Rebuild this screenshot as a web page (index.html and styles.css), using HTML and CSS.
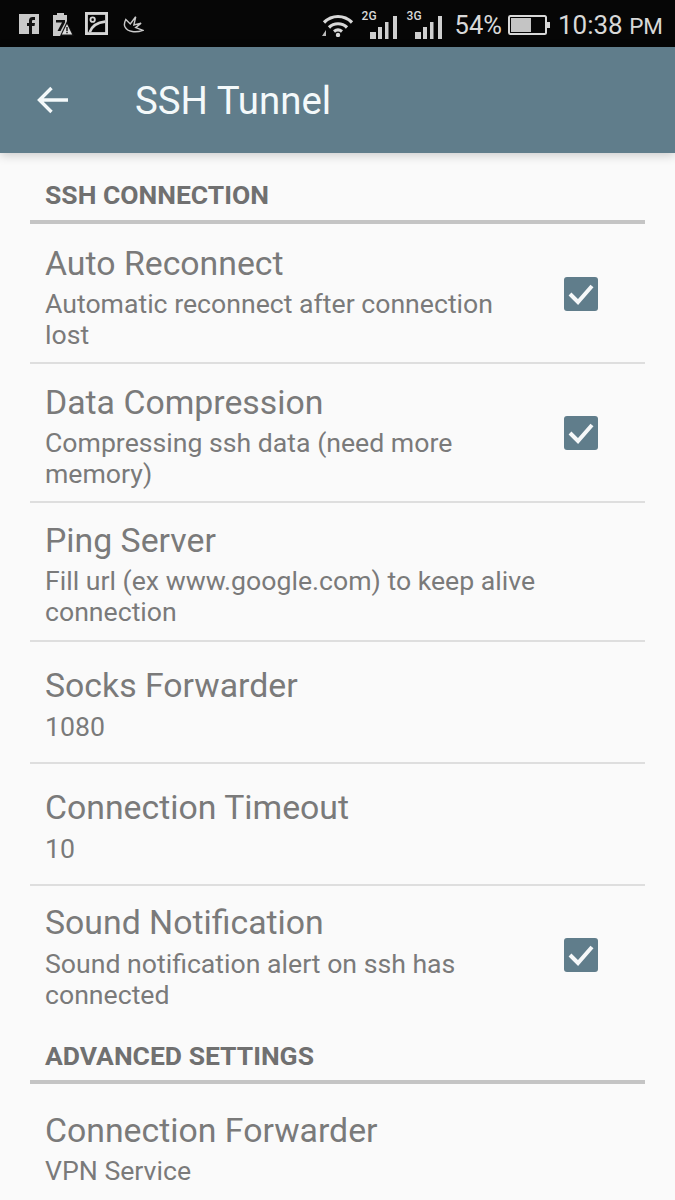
FILE: index.html
```html
<!DOCTYPE html>
<html lang="en">
  <head>
    <meta charset="UTF-8" />
    <meta name="viewport" content="width=device-width, initial-scale=1.0" />
    <title>SSH Tunnel</title>
    <link rel="stylesheet" href="styles.css">
  </head>
  <body>
    <div class="status-bar">
      <div class="status-left">
        <svg class="ic-fb" viewBox="0 0 20 20"><path fill="#c9c9c9" d="M0 0h20v20H0z"/><path fill="#111" d="M10 20v-8H8V9h2V6.500C10 4 11.500 3 13.500 3H16v3h-1.600c-.9 0-1.400.4-1.400 1.300V9h3l-.5 3H13v8z"/></svg>
        <svg class="ic-bat" viewBox="0 0 22 24"><path fill="#c9c9c9" d="M5 1h7v2h3v21H1V3h4z"/><path fill="#111" d="M4 8h9v2.500L8.500 19H5.500L10 10.500H4z"/><path fill="#111" d="M15 9l7 15H8z"/><path fill="#ddd" d="M15 12l5.200 10.500H9.800z"/><path fill="#111" d="M14.300 15h1.400v4h-1.400zM14.300 19.800h1.400v1.400h-1.400z"/></svg>
        <svg class="ic-pic" viewBox="0 0 24 24"><rect x="1.500" y="1.500" width="21" height="21" fill="none" stroke="#d6d6d6" stroke-width="3"/><circle cx="8" cy="8" r="2.300" fill="none" stroke="#d6d6d6" stroke-width="1.900"/><path fill="none" stroke="#d6d6d6" stroke-width="2.800" d="M5 21c2-6 7-10 16-11"/></svg>
        <svg class="ic-bird" viewBox="0 0 24 20"><path fill="none" stroke="#c9c9c9" stroke-width="1.600" d="M4 5l5 5 6-8-2 9 8-2-6 5 8 3c-8 3-17 2-20-4-1-2-.5-5 1-8z"/></svg>
      </div>
      <div class="status-right">
        <svg class="ic-wifi" viewBox="0 0 34 24"><g fill="none" stroke="#d8d8d8" stroke-width="3.200"><path d="M3 9.500c8-8 20-8 28 0"/><path d="M8 14.500c5-5 13-5 18 0"/><path d="M13 18.500c2.500-2 5.500-2 8 0"/></g><circle cx="17" cy="22" r="2.200" fill="#d8d8d8"/><path fill="#bbb" d="M1 23l4-6v6z"/></svg>
        <div class="signal">
          <span class="net">2G</span>
          <svg class="ic-bars" viewBox="0 0 27 23"><path fill="#cfcfcf" d="M0 16h6v7H0zM8 11h4v12H8zM15 6h3.500v17H15zM23 0h4v23h-4z"/></svg>
        </div>
        <div class="signal">
          <span class="net">3G</span>
          <svg class="ic-bars" viewBox="0 0 27 23"><path fill="#cfcfcf" d="M0 16h6v7H0zM8 11h4v12H8zM15 6h3.500v17H15zM23 0h4v23h-4z"/></svg>
        </div>
        <span class="percent">54%</span>
        <svg class="ic-battery" viewBox="0 0 42 20"><rect x="1" y="1" width="37" height="18" rx="1.500" fill="none" stroke="#d8d8d8" stroke-width="2"/><rect x="3" y="3" width="20" height="14" fill="#c4c4c4"/><rect x="39" y="7" width="3" height="6" fill="#d8d8d8"/></svg>
        <span class="clock">10:38 <small>PM</small></span>
      </div>
    </div>

    <div class="toolbar">
      <svg class="ic-back" viewBox="0 0 32 28"><path fill="none" stroke="#f4f9fa" stroke-width="3.400" d="M31 14H3M14.500 2L2.500 14l12 12"/></svg>
      <div class="toolbar-title">SSH Tunnel</div>
    </div>

    <div class="settings">
      <div class="category">SSH CONNECTION</div>

      <div class="pref tall first">
        <div class="pref-text">
          <div class="pref-title">Auto Reconnect</div>
          <div class="pref-sub">Automatic reconnect after connection lost</div>
        </div>
        <svg class="check" viewBox="0 0 34 34"><rect width="34" height="34" rx="3" fill="#607d8b"/><path fill="none" stroke="#f6f8f9" stroke-width="4" d="M6 17l8 8L28 9"/></svg>
      </div>

      <div class="pref tall">
        <div class="pref-text">
          <div class="pref-title">Data Compression</div>
          <div class="pref-sub">Compressing ssh data (need more memory)</div>
        </div>
        <svg class="check" viewBox="0 0 34 34"><rect width="34" height="34" rx="3" fill="#607d8b"/><path fill="none" stroke="#f6f8f9" stroke-width="4" d="M6 17l8 8L28 9"/></svg>
      </div>

      <div class="pref tall ping">
        <div class="pref-text">
          <div class="pref-title">Ping Server</div>
          <div class="pref-sub">Fill url (ex www.google.com) to keep alive connection</div>
        </div>
      </div>

      <div class="pref short">
        <div class="pref-text">
          <div class="pref-title">Socks Forwarder</div>
          <div class="pref-sub">1080</div>
        </div>
      </div>

      <div class="pref short">
        <div class="pref-text">
          <div class="pref-title">Connection Timeout</div>
          <div class="pref-sub">10</div>
        </div>
      </div>

      <div class="pref sound">
        <div class="pref-text">
          <div class="pref-title">Sound Notification</div>
          <div class="pref-sub">Sound notification alert on ssh has connected</div>
        </div>
        <svg class="check" viewBox="0 0 34 34"><rect width="34" height="34" rx="3" fill="#607d8b"/><path fill="none" stroke="#f6f8f9" stroke-width="4" d="M6 17l8 8L28 9"/></svg>
      </div>

      <div class="category second">ADVANCED SETTINGS</div>

      <div class="pref last">
        <div class="pref-text">
          <div class="pref-title">Connection Forwarder</div>
          <div class="pref-sub">VPN Service</div>
        </div>
      </div>
    </div>
  </body>
</html>
```

FILE: styles.css
```css
* {
  box-sizing: border-box;
}
html,
body {
  margin: 0;
  height: 1200px;
  overflow: hidden;
}
body {
  background-color: #fafafa;
  font-family: Roboto, "Liberation Sans", sans-serif;
  color: #7a7a7a;
}
svg {
  display: block;
  flex-shrink: 0;
}

/* status bar */
.status-bar {
  height: 47px;
  background-color: #060606;
  display: flex;
  justify-content: space-between;
  align-items: center;
  padding: 0 12px 0 19px;
  color: #d8d8d8;
}
.status-left {
  display: flex;
  align-items: center;
}
.ic-fb {
  width: 20px;
  height: 20px;
  margin-right: 13px;
}
.ic-bat {
  width: 22px;
  height: 24px;
  margin-right: 11px;
}
.ic-pic {
  width: 23px;
  height: 23px;
  margin-right: 14px;
}
.ic-bird {
  width: 22px;
  height: 18px;
}
.status-right {
  display: flex;
  align-items: center;
  margin-top: 2px;
}
.ic-wifi {
  width: 34px;
  height: 24px;
  margin-right: 15px;
}
.signal {
  position: relative;
  width: 27px;
  height: 28px;
  margin-right: 18px;
  display: flex;
  align-items: flex-end;
}
.signal:last-of-type {
  margin-right: 13px;
}
.net {
  position: absolute;
  top: -1px;
  left: -8px;
  font-size: 12px;
  font-weight: 500;
  line-height: 12px;
}
.ic-bars {
  width: 27px;
  height: 23px;
}
.percent {
  font-size: 25.500px;
  margin-right: 6px;
}
.ic-battery {
  width: 42px;
  height: 20px;
  margin-right: 8px;
}
.clock {
  font-size: 26px;
  white-space: nowrap;
}
.clock small {
  font-size: 22.500px;
}

/* toolbar */
.toolbar {
  height: 106px;
  background-color: #607d8b;
  display: flex;
  align-items: center;
  padding-left: 37px;
  box-shadow: 0 2px 10px rgba(0, 0, 0, 0.2);
  position: relative;
}
.ic-back {
  width: 32px;
  height: 28px;
  margin-right: 66px;
  margin-top: -1px;
}
.toolbar-title {
  font-size: 38.400px;
  color: #f4f9fa;
}

/* settings list */
.settings {
  margin: 0 30px;
}
.category {
  height: 71px;
  padding: 27px 15px 0;
  font-size: 26.500px;
  line-height: 30px;
  font-weight: 700;
  color: #707070;
  border-bottom: 4px solid #c4c4c4;
}
.category.second {
  height: 59px;
  padding-top: 16px;
}
.pref {
  display: flex;
  align-items: flex-start;
  justify-content: space-between;
  padding: 19px 47px 0 15px;
  border-bottom: 2px solid #dedede;
}
.pref.tall {
  height: 139px;
}
.pref.tall.first {
  height: 140px;
  padding-top: 20px;
}
.pref.tall.ping {
  padding-top: 18px;
}
.pref.short {
  height: 122px;
  padding-top: 24px;
}
.pref.sound {
  height: 139px;
  padding-top: 17px;
  border-bottom: 0;
}
.pref.last {
  border-bottom: 0;
  padding-top: 27px;
}
.pref-text {
  width: 495px;
}
.pref-title {
  font-size: 33.800px;
  line-height: 40px;
}
.pref-sub {
  font-size: 26.650px;
  line-height: 31px;
  margin-top: 5px;
}
.pref.short .pref-sub,
.pref.sound .pref-sub {
  margin-top: 6px;
}
.check {
  width: 34px;
  height: 34px;
  margin-top: 33px;
}
.pref.sound .check {
  margin-top: 35px;
}
```
